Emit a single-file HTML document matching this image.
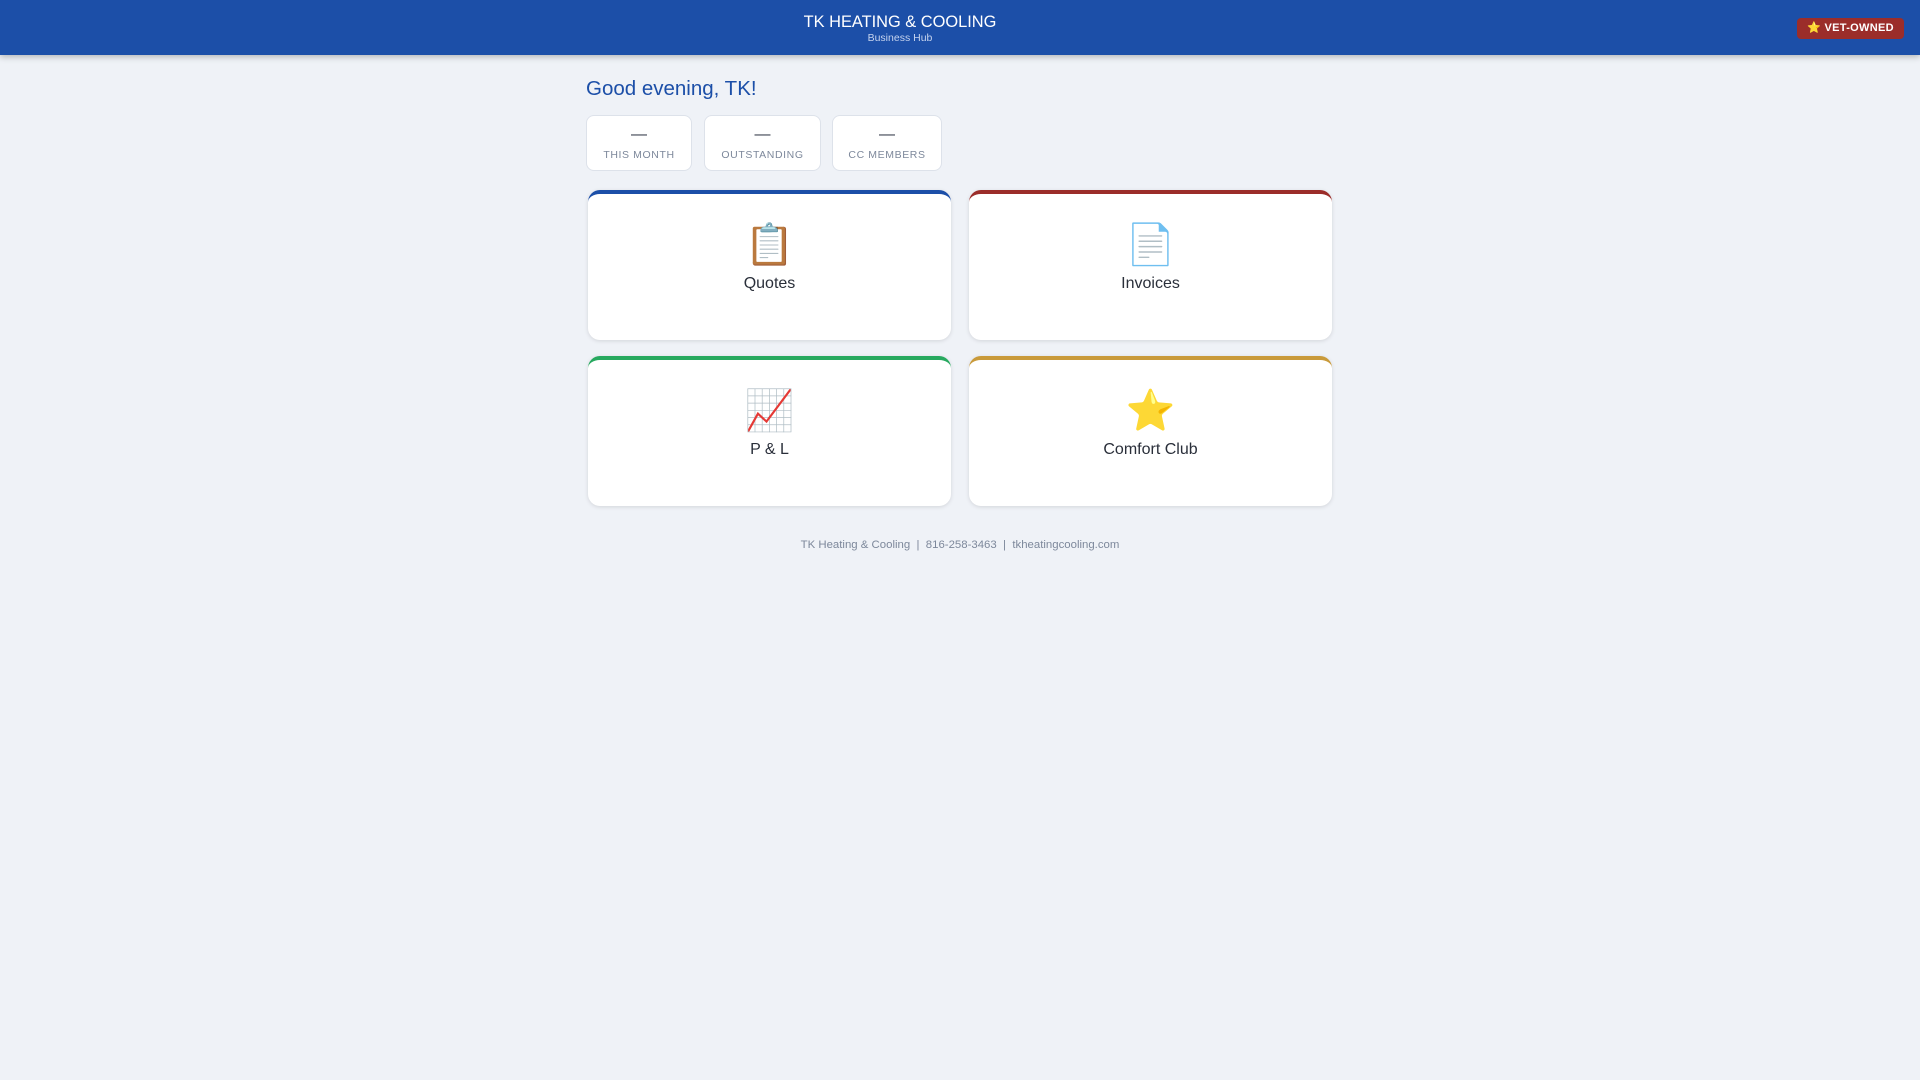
<!DOCTYPE html>
<html><head><meta charset="utf-8"><style>
*{box-sizing:border-box;margin:0;padding:0}
body{width:1920px;height:1080px;background:#eff2f7;font-family:"Liberation Sans",sans-serif;position:relative;overflow:hidden}
.hdr{position:absolute;left:0;top:0;width:1920px;height:55px;background:#1c4fa8;box-shadow:0 2px 6px rgba(0,0,0,.25)}
.t1{position:absolute;left:0;width:1800px;top:13px;text-align:center;color:#fff;font-size:16.4px}
.t2{position:absolute;left:0;width:1800px;top:32px;text-align:center;color:#c5d3ee;font-size:10.5px}
.badge{position:absolute;left:1797px;top:18px;width:107px;height:21px;background:#9b2d2a;border-radius:4px;color:#fff;font-weight:bold;font-size:11px;line-height:21px;text-align:center;letter-spacing:.3px}
.greet{position:absolute;left:586px;top:77px;color:#1c4fa8;font-size:20.5px}
.stat{position:absolute;top:115px;height:56px;background:#fff;border:1px solid #dde2ea;border-radius:8px;text-align:center}
.stat .d{color:#333a48;font-size:16px;margin-top:10px;height:20px}
.stat .l{color:#7d889b;font-size:10.5px;letter-spacing:.6px;margin-top:3px}
.card{position:absolute;width:363px;height:150px;background:#fff;border-radius:12px;border-top:4px solid;box-shadow:0 1px 4px rgba(0,0,0,.12);text-align:center}
.card .i{font-size:40px;margin-top:27px;height:48px;line-height:48px;font-family:"Noto Color Emoji",sans-serif}
.card .n{font-size:16px;color:#2a2f3a;margin-top:6px}
.foot{position:absolute;top:539px;left:0;width:1920px;text-align:center;color:#7d889b;font-size:11.4px}
</style></head><body>
<div class="hdr"><div class="t1">TK HEATING &amp; COOLING</div><div class="t2">Business Hub</div><div class="badge">⭐ VET-OWNED</div></div>
<div class="greet">Good evening, TK!</div>
<div class="stat" style="left:586px;width:106px"><div class="d">—</div><div class="l">THIS MONTH</div></div>
<div class="stat" style="left:704px;width:117px"><div class="d">—</div><div class="l">OUTSTANDING</div></div>
<div class="stat" style="left:832px;width:110px"><div class="d">—</div><div class="l">CC MEMBERS</div></div>
<div class="card" style="left:588px;top:190px;border-color:#1c4fa8"><div class="i">📋</div><div class="n">Quotes</div></div>
<div class="card" style="left:969px;top:190px;border-color:#9b2d2a"><div class="i">📄</div><div class="n">Invoices</div></div>
<div class="card" style="left:588px;top:356px;border-color:#27a95f"><div class="i">📈</div><div class="n">P &amp; L</div></div>
<div class="card" style="left:969px;top:356px;border-color:#c99a3a"><div class="i">⭐</div><div class="n">Comfort Club</div></div>
<div class="foot">TK Heating &amp; Cooling &nbsp;|&nbsp; 816-258-3463 &nbsp;|&nbsp; tkheatingcooling.com</div>
</body></html>
